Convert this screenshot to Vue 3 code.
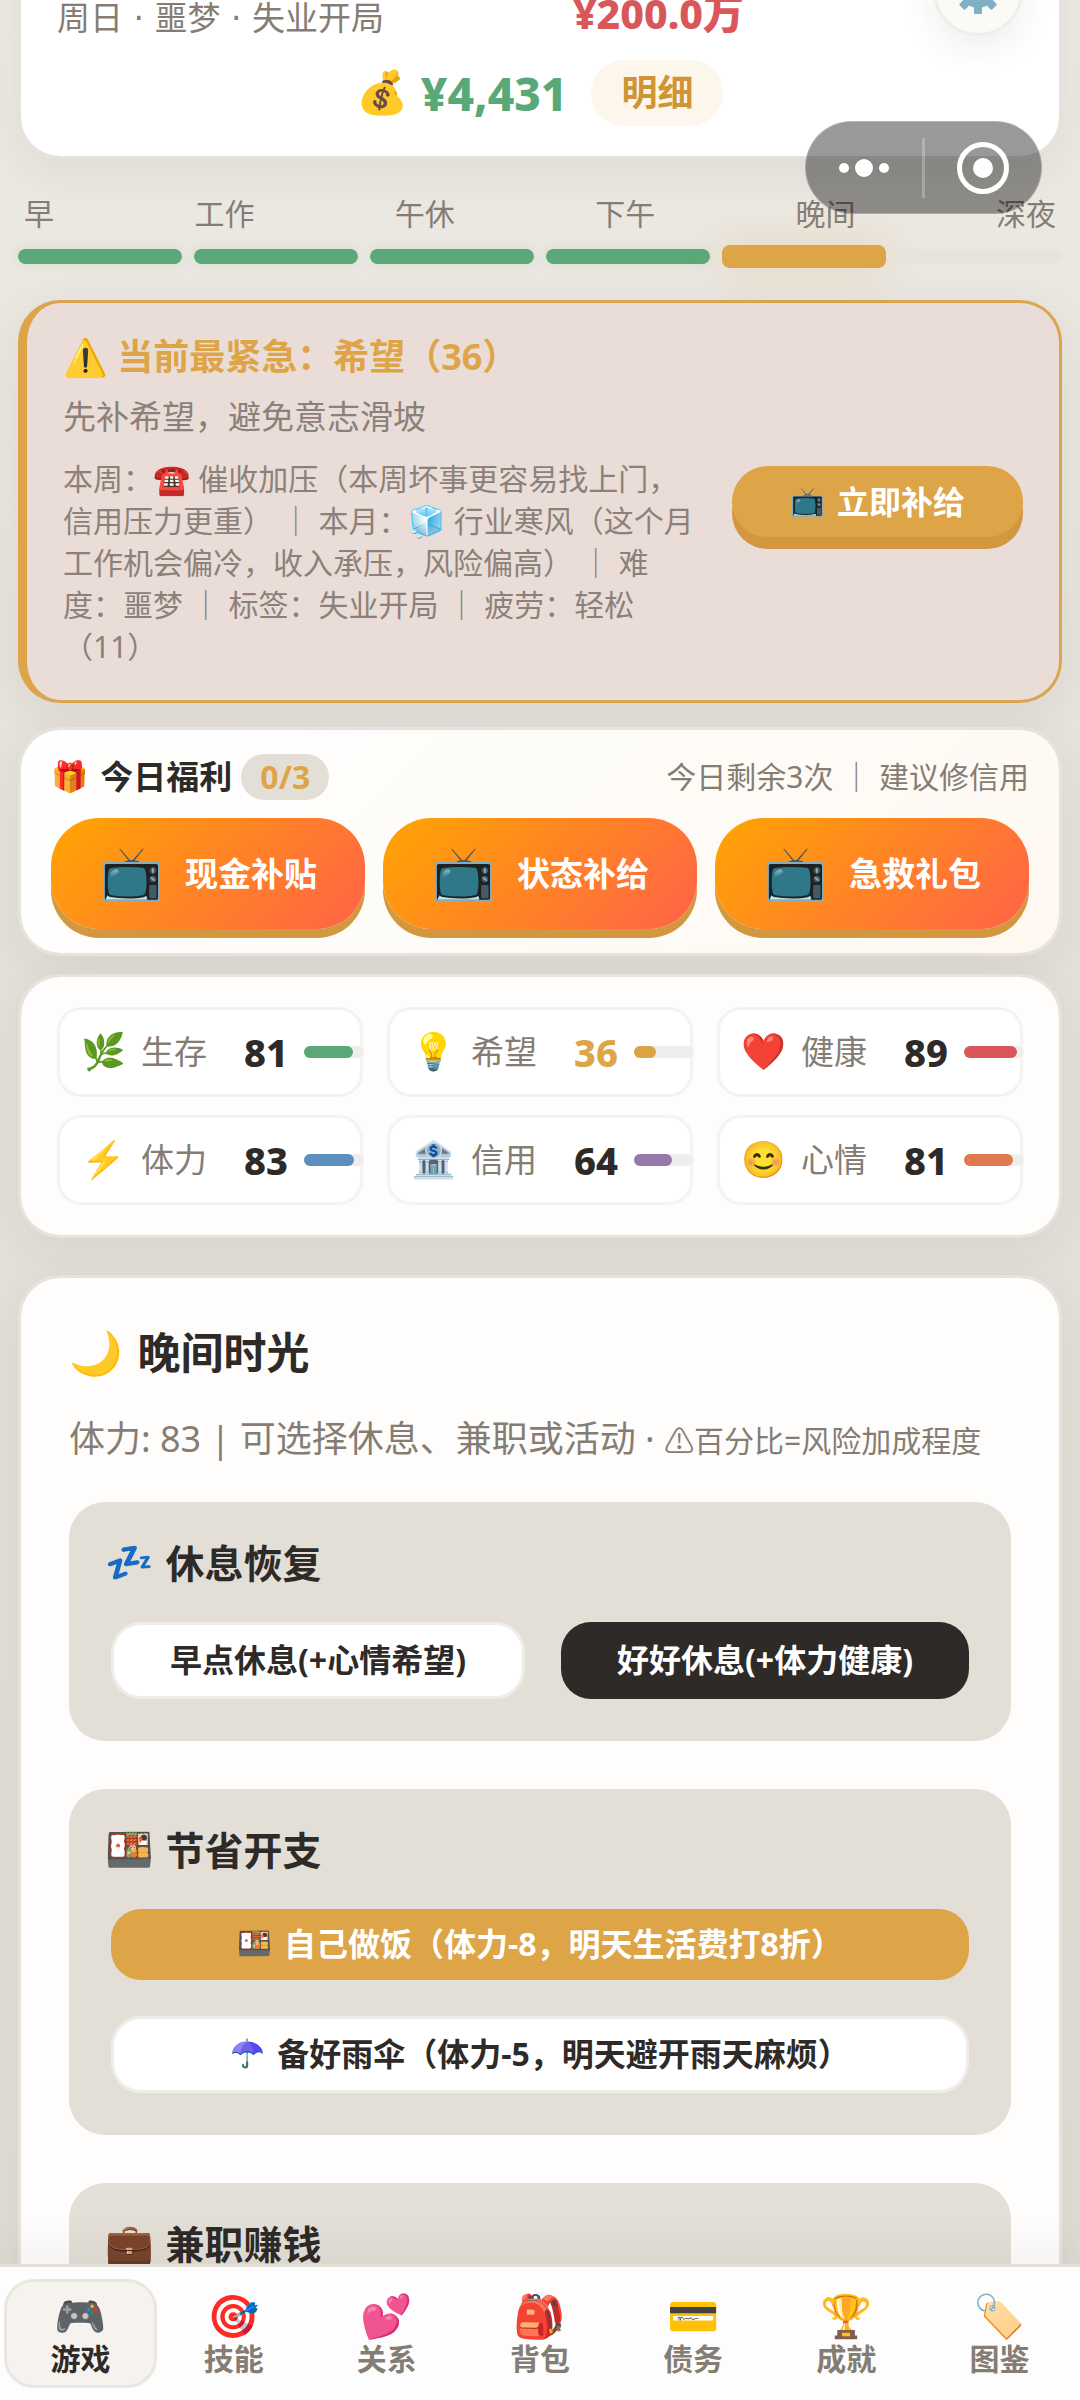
<script setup>
const periods = [
  { name: '早', state: 'done' },
  { name: '工作', state: 'done' },
  { name: '午休', state: 'done' },
  { name: '下午', state: 'done' },
  { name: '晚间', state: 'active' },
  { name: '深夜', state: 'todo' },
]
const gifts = ['现金补贴', '状态补给', '急救礼包']
const stats = [
  { icon: '🌿', name: '生存', value: 81, color: '#5aa877' },
  { icon: '💡', name: '希望', value: 36, color: '#dca246', low: true },
  { icon: '❤️', name: '健康', value: 89, color: '#d9575a' },
  { icon: '⚡', name: '体力', value: 83, color: '#5b8fbe' },
  { icon: '🏦', name: '信用', value: 64, color: '#9678ab' },
  { icon: '😊', name: '心情', value: 81, color: '#df7a50' },
]
const tabs = [
  { icon: '🎮', name: '游戏', active: true },
  { icon: '🎯', name: '技能' },
  { icon: '💕', name: '关系' },
  { icon: '🎒', name: '背包' },
  { icon: '💳', name: '债务' },
  { icon: '🏆', name: '成就' },
  { icon: '🏷️', name: '图鉴' },
]
</script>

<template>
  <div class="screen">
    <main class="page">
      <header class="card summary">
        <div class="summary-row">
          <span class="day">周日 · 噩梦 · 失业开局</span>
          <strong class="debt">¥200.0万</strong>
          <button class="gear" aria-label="设置">
            <svg viewBox="0 0 48 48" width="48" height="48">
              <g fill="#7fb0c6">
                <rect v-for="n in 4" :key="n" x="20" y="1" width="8" height="46" rx="1" :transform="`rotate(${n * 45} 24 24)`" />
                <circle cx="24" cy="24" r="17" />
              </g>
              <circle cx="24" cy="24" r="7" fill="#fbfaf7" />
            </svg>
          </button>
        </div>
        <div class="money-row">
          <span class="emoji bag">💰</span>
          <strong class="money">¥4,431</strong>
          <button class="detail">明细</button>
        </div>
      </header>

      <section class="timeline">
        <div class="labels">
          <span v-for="p in periods" :key="p.name">{{ p.name }}</span>
        </div>
        <div class="bars">
          <i v-for="p in periods" :key="p.name" :class="p.state"></i>
        </div>
      </section>

      <section class="urgent">
        <h2>⚠️ 当前最紧急：希望（36）</h2>
        <p class="advice">先补希望，避免意志滑坡</p>
        <div class="urgent-row">
          <p class="meta">本周：☎️ 催收加压（本周坏事更容易找上门，信用压力更重） ｜ 本月：🧊 行业寒风（这个月工作机会偏冷，收入承压，风险偏高） ｜ 难度：噩梦 ｜ 标签：失业开局 ｜ 疲劳：轻松（11）</p>
          <button class="supply"><span class="emoji">📺</span>立即补给</button>
        </div>
      </section>

      <section class="card gifts">
        <div class="gifts-head">
          <span class="emoji">🎁</span>
          <h2>今日福利</h2>
          <span class="badge">0/3</span>
          <span class="left">今日剩余3次 ｜ 建议修信用</span>
        </div>
        <div class="gift-buttons">
          <button v-for="g in gifts" :key="g"><span class="emoji tv">📺</span>{{ g }}</button>
        </div>
      </section>

      <section class="card stats">
        <div v-for="s in stats" :key="s.name" class="stat">
          <span class="emoji stat-icon">{{ s.icon }}</span>
          <span class="stat-name">{{ s.name }}</span>
          <strong :class="{ low: s.low }">{{ s.value }}</strong>
          <span class="meter"><i :style="{ width: s.value + '%', background: s.color }"></i></span>
        </div>
      </section>

      <section class="card evening">
        <h1><span class="emoji">🌙</span>晚间时光</h1>
        <p class="hint">体力: 83 | 可选择休息、兼职或活动 · <small>⚠百分比=风险加成程度</small></p>

        <div class="panel">
          <h3><span class="emoji">💤</span>休息恢复</h3>
          <div class="actions two">
            <button class="plain">早点休息(+心情希望)</button>
            <button class="dark">好好休息(+体力健康)</button>
          </div>
        </div>
        <div class="panel">
          <h3><span class="emoji">🍱</span>节省开支</h3>
          <div class="actions">
            <button class="gold"><span class="emoji">🍱</span>自己做饭（体力-8，明天生活费打8折）</button>
            <button class="plain"><span class="emoji">☂️</span>备好雨伞（体力-5，明天避开雨天麻烦）</button>
          </div>
        </div>
        <div class="panel">
          <h3><span class="emoji">💼</span>兼职赚钱</h3>
        </div>
      </section>
    </main>

    <div class="capsule">
      <button aria-label="更多"><i></i><i class="mid"></i><i></i></button>
      <button aria-label="关闭"><b></b></button>
    </div>

    <nav class="tabs">
      <a v-for="t in tabs" :key="t.name" href="#" :class="{ active: t.active }">
        <span class="emoji tab-icon">{{ t.icon }}</span>
        <span>{{ t.name }}</span>
      </a>
    </nav>
  </div>
</template>

<style>
body {
  background: #e3dfd8;
}
</style>

<style scoped>
.screen {
  position: relative;
  display: flex;
  flex-direction: column;
  height: 100vh;
  overflow: hidden;
  background: linear-gradient(180deg, #edeae4 0%, #e5e1da 40%, #e2ded6 100%);
  color: #2d2a28;
  font-family: "Noto Sans", "Noto Sans CJK SC", "Noto Color Emoji", sans-serif;
  font-size: 30px;
  line-height: 42px;
}
h1, h2, h3, p {
  margin: 0;
}
button {
  border: 0;
  padding: 0;
  font: inherit;
  color: inherit;
  cursor: pointer;
}
.emoji {
  font-family: "Noto Color Emoji", sans-serif;
  font-weight: 400;
}
.page {
  flex: 1;
  min-height: 0;
  overflow: hidden;
  padding: 0 18px;
}
.card {
  border: 3px solid #e6e2dc;
  border-radius: 42px;
  background: #fefdfb;
  background-clip: padding-box;
  box-shadow: 0 12px 48px rgba(45, 42, 40, 0.07);
}

/* summary */
.summary {
  margin-top: -93px;
  padding: 30px 36px;
  background-color: #fff;
}
.summary-row {
  display: flex;
  justify-content: space-between;
  align-items: flex-end;
  height: 102px;
}
.day {
  font-family: "DejaVu Sans", "Noto Sans CJK SC", sans-serif;
  font-size: 33px;
  line-height: 46px;
  color: #857d74;
}
.debt {
  font-size: 41px;
  font-weight: 800;
  line-height: 58px;
  color: #d9575a;
}
.gear {
  display: flex;
  align-items: center;
  justify-content: center;
  align-self: center;
  width: 90px;
  height: 90px;
  border: 3px solid #f1eee9;
  border-radius: 50%;
  background: #fbfaf7;
  box-shadow: 0 12px 36px rgba(45, 42, 40, 0.08);
}
.money-row {
  display: flex;
  justify-content: center;
  align-items: center;
  margin-top: 18px;
}
.bag {
  font-size: 42px;
}
.money {
  margin: 0 24px 0 12px;
  font-size: 46px;
  font-weight: 800;
  color: #5aa877;
}
.detail {
  height: 66px;
  padding: 0 30px;
  border-radius: 33px;
  background: #fdf6ec;
  color: #cf9433;
  font-size: 36px;
  font-weight: 700;
}

/* timeline */
.timeline {
  margin-top: 34px;
}
.labels {
  display: flex;
  justify-content: space-between;
  padding: 0 6px;
  color: #857d74;
}
.bars {
  display: flex;
  align-items: center;
  gap: 12px;
  height: 15px;
  margin-top: 14px;
}
.bars i {
  flex: 1;
  height: 15px;
  border-radius: 8px;
}
.bars .done {
  background: #5aa877;
  box-shadow: 0 0 12px rgba(90, 168, 119, 0.15);
}
.bars .active {
  height: 23px;
  background: #dea548;
  box-shadow: 0 0 36px rgba(222, 165, 72, 0.3);
}
.bars .todo {
  background: #e6e2dd;
}

/* urgent */
.urgent {
  margin-top: 36px;
  padding: 28px 36px 32px;
  border: 3px solid #dba450;
  border-left: 9px solid #dea548;
  border-radius: 42px;
  background: #eaddd7;
  box-shadow: 0 12px 48px rgba(45, 42, 40, 0.07);
}
.urgent h2 {
  font-size: 36px;
  line-height: 51px;
  color: #dea548;
}
.advice {
  margin-top: 12px;
  font-size: 33px;
  line-height: 46px;
  color: #8c817a;
}
.urgent-row {
  display: flex;
  align-items: flex-start;
  gap: 36px;
  margin-top: 18px;
}
.meta {
  flex: 1;
  color: #8c817a;
}
.supply {
  flex: none;
  display: flex;
  align-items: center;
  justify-content: center;
  gap: 12px;
  min-width: 291px;
  height: 71px;
  margin-top: 8px;
  border-radius: 36px;
  background: #dea548;
  box-shadow: 0 12px 0 #d3983f;
  color: #fff;
  font-size: 32px;
  font-weight: 700;
}
.supply .emoji, .actions .emoji {
  font-size: 28px;
}

/* gifts */
.gifts {
  margin-top: 24px;
  padding: 24px 30px;
  background: linear-gradient(135deg, #fff 0%, #fefcf8 50%, #fff8f1 100%) padding-box;
}
.gifts-head {
  display: flex;
  align-items: center;
}
.gifts-head h2 {
  margin: 0 9px 0 12px;
  font-size: 33px;
}
.badge {
  padding: 0 19px;
  border-radius: 24px;
  background: #e3dfd7;
  color: #dea548;
  font-size: 32px;
  font-weight: 700;
  line-height: 46px;
}
.left {
  margin-left: auto;
  color: #857d74;
}
.gift-buttons {
  display: flex;
  gap: 18px;
  margin-top: 18px;
}
.gift-buttons button {
  flex: 1;
  display: flex;
  align-items: center;
  justify-content: center;
  gap: 21px;
  height: 111px;
  border-radius: 48px;
  background: linear-gradient(135deg, #ffa502, #ff6348);
  box-shadow: 0 9px 0 #d3983f;
  color: #fff;
  font-size: 33px;
  font-weight: 700;
}
.tv {
  font-size: 52px;
}

/* stats */
.stats {
  display: grid;
  grid-template-columns: repeat(3, 1fr);
  gap: 18px 24px;
  margin-top: 18px;
  padding: 30px 36px;
}
.stat {
  display: flex;
  align-items: center;
  height: 90px;
  box-sizing: border-box;
  padding-left: 21px;
  border: 3px solid #f5f3f1;
  border-radius: 24px;
  background: #fff;
}
.stat-icon {
  width: 42px;
  font-size: 36px;
}
.stat-name {
  margin-left: 18px;
  font-size: 33px;
  color: #857d74;
}
.stat strong {
  margin-left: auto;
  font-size: 38px;
  font-weight: 800;
}
.stat .low {
  color: #dea548;
}
.meter {
  flex: none;
  width: 60px;
  height: 12px;
  margin: 0 -4px 0 16px;
  border-radius: 6px;
  background: #efeeed;
}
.meter i {
  display: block;
  height: 12px;
  border-radius: 6px;
}

/* evening */
.evening {
  margin-top: 37px;
  padding: 48px;
}
.evening h1 {
  display: flex;
  gap: 15px;
  font-size: 43px;
  line-height: 54px;
}
.hint {
  margin: 34px 0 36px;
  font-size: 36px;
  line-height: 50px;
  color: #857d74;
}
.hint small {
  font-size: 30px;
}
.panel {
  margin-bottom: 48px;
  padding: 36px 36px 42px;
  border-radius: 36px;
  background: #e3dfd7;
}
.panel h3 {
  display: flex;
  gap: 12px;
  font-size: 39px;
  line-height: 50px;
  font-weight: 700;
}
.actions {
  display: flex;
  flex-direction: column;
  gap: 36px;
  margin: 34px 6px 0;
}
.two {
  flex-direction: row;
}
.actions button {
  display: flex;
  align-items: center;
  justify-content: center;
  gap: 12px;
  min-height: 69px;
  padding-bottom: 2px;
  box-sizing: content-box;
  border-radius: 30px;
  font-size: 32px;
  font-weight: 700;
}
.two button {
  flex: 1 1 auto;
}
.actions .plain {
  border: 3px solid #f0ede9;
  background: #fff;
}
.actions .dark {
  background: #2d2a28;
  color: #fff;
}
.actions .gold {
  background: #dea548;
  color: #fff;
}

/* floating capsule */
.capsule {
  position: absolute;
  top: 121px;
  right: 38px;
  display: flex;
  align-items: center;
  width: 237px;
  height: 93px;
  box-sizing: border-box;
  border: 1px solid rgba(255, 255, 255, 0.25);
  border-radius: 48px;
  background: rgba(0, 0, 0, 0.4);
}
.capsule button {
  flex: 1;
  display: flex;
  align-items: center;
  justify-content: center;
  gap: 6px;
  height: 60px;
  background: none;
}
.capsule button + button {
  border-left: 3px solid rgba(255, 255, 255, 0.25);
}
.capsule i {
  width: 10px;
  height: 10px;
  border-radius: 50%;
  background: #fff;
}
.capsule .mid {
  width: 18px;
  height: 18px;
}
.capsule b {
  width: 20px;
  height: 20px;
  padding: 11px;
  border: 5px solid #fff;
  border-radius: 50%;
  background: #fff content-box;
  background-clip: content-box;
}

/* tab bar */
.tabs {
  position: relative;
  display: flex;
  padding: 12px 4px;
  border-top: 3px solid #e3dfd7;
  background: #fdfdfd;
  box-shadow: 0 -12px 48px rgba(45, 42, 40, 0.06);
}
.tabs a {
  flex: 1;
  display: flex;
  flex-direction: column;
  align-items: center;
  height: 109px;
  box-sizing: border-box;
  padding-top: 11px;
  border: 3px solid transparent;
  border-radius: 30px;
  color: #857d74;
  font-weight: 700;
  line-height: 36px;
  text-decoration: none;
}
.tabs .active {
  border-color: #eae7e3;
  background: #f6f3ef;
  color: #2d2a28;
}
.tab-icon {
  font-size: 42px;
  line-height: 48px;
}
</style>
